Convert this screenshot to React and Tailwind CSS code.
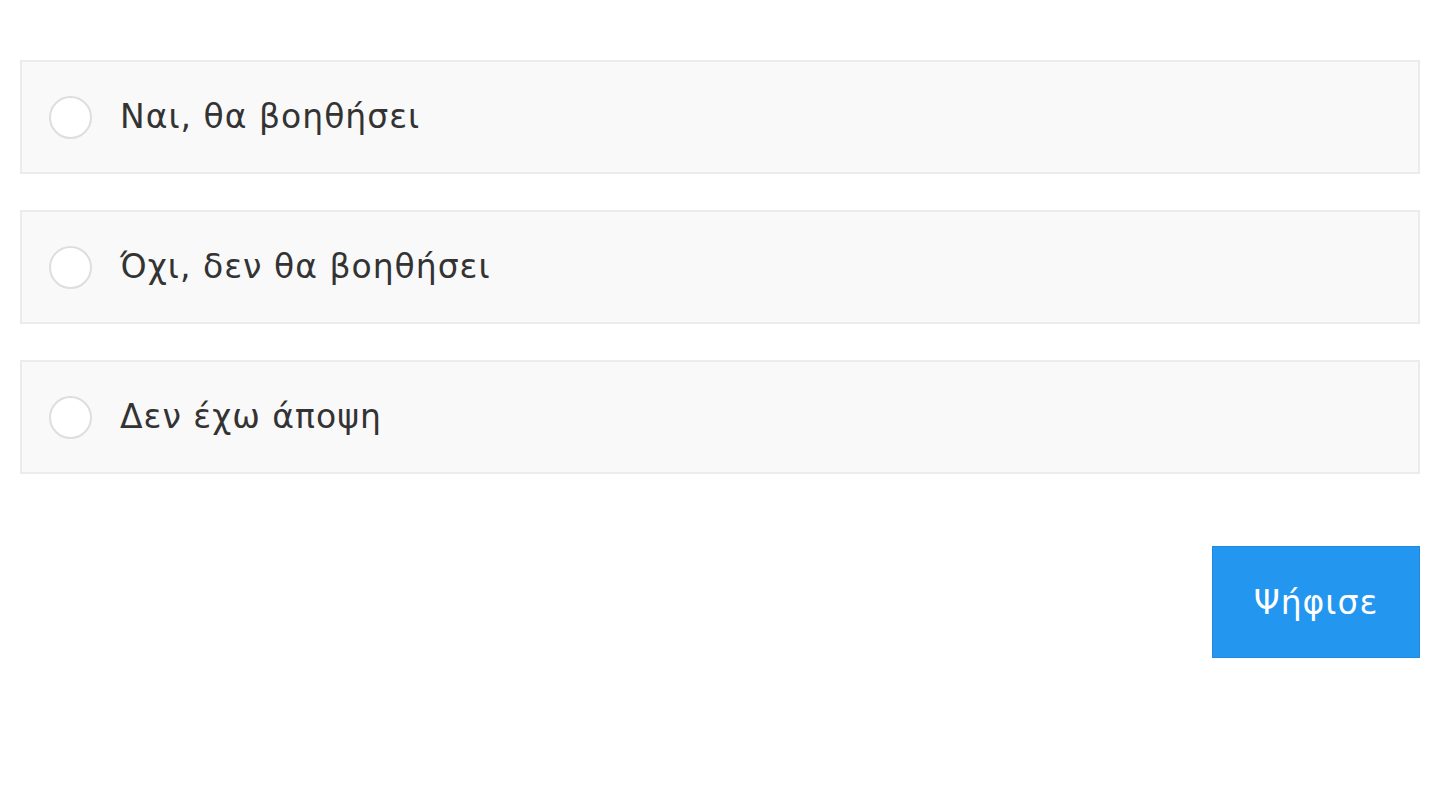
export default function App() {
  const opts = ["Ναι, θα βοηθήσει", "Όχι, δεν θα βοηθήσει", "Δεν έχω άποψη"];
  return (
    <div className="w-[1446px] h-[794px] bg-white px-[20px] pt-[60px]" style={{ fontFamily: "'DejaVu Sans', sans-serif" }}>
      <div className="flex flex-col gap-[36px]">
        {opts.map((o) => (
          <label key={o} className="flex items-center h-[114px] w-[1400px] bg-[#f9f9f9] border-2 border-[#ececec] pl-[27px]">
            <span className="w-[43px] h-[43px] rounded-full bg-white border-2 border-[#dedede] shrink-0" />
            <span className="ml-[28px] text-[33px] leading-none text-[#333] tracking-[1px] pb-[2px]">{o}</span>
          </label>
        ))}
      </div>
      <div className="flex justify-end w-[1400px] mt-[72px]">
        <button className="w-[208px] h-[112px] bg-[#2396ef] border border-[#1e88e5] text-white text-[33px] leading-none tracking-[1px]">Ψήφισε</button>
      </div>
    </div>
  );
}
